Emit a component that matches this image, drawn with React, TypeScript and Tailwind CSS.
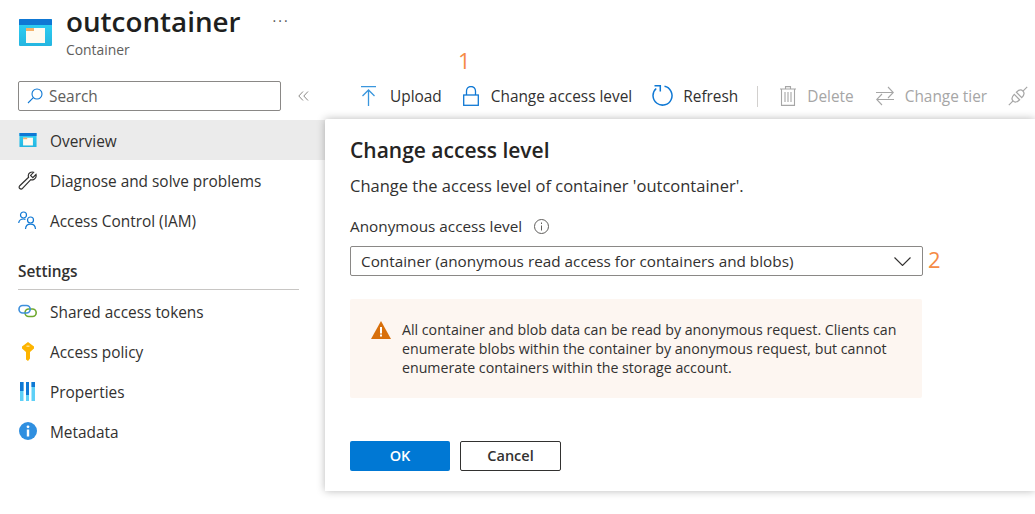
import React from "react";

const font = { fontFamily: '"Open Sans", "Noto Sans", sans-serif' };

function ContainerIcon({ w, h }: { w: number; h: number }) {
  return (
    <svg width={w} height={h} viewBox="0 0 33 27">
      <defs>
        <linearGradient id="cbody" x1="0" y1="0" x2="0" y2="1">
          <stop offset="0" stopColor="#2fd3f7" />
          <stop offset="1" stopColor="#25b5e0" />
        </linearGradient>
      </defs>
      <rect x="0" y="0" width="33" height="27" rx="1" fill="url(#cbody)" />
      <path d="M0 1a1 1 0 0 1 1-1h31a1 1 0 0 1 1 1v5H0z" fill="#0f78d4" />
      <rect x="7" y="9" width="19" height="15" fill="#fffaf0" />
      <rect x="7" y="9" width="8" height="3" fill="#f4b26b" />
    </svg>
  );
}

function NavItem({ icon, label, active, tall }: { icon: React.ReactNode; label: string; active?: boolean; tall?: boolean }) {
  return (
    <div className={`flex h-10 items-center pl-[18px] text-[15.4px] text-[#323130] ${active ? "bg-[#ebebeb]" : ""}`}>
      <span className="flex w-[19px] justify-center">{icon}</span>
      <span className={`ml-[13px] ${tall ? "mt-[4px]" : "mt-[4px]"}`}>{label}</span>
    </div>
  );
}

function ToolItem({ icon, label, disabled, className }: { icon: React.ReactNode; label: string; disabled?: boolean; className: string }) {
  return (
    <div className={`flex items-center text-[15.4px] ${disabled ? "text-[#a6a6a6]" : "text-[#323130]"} ${className}`}>
      {icon}
      <span className="mt-[1px]">{label}</span>
    </div>
  );
}

export default function App() {
  return (
    <div style={font} className="relative h-[514px] w-[1035px] overflow-hidden bg-white">
      <header className="flex h-[81px] pl-[19px]">
        <div className="mt-[19px]"><ContainerIcon w={33} h={27} /></div>
        <div className="ml-[14px]">
          <div className="mt-[2px] flex items-center">
            <h1 className="text-[27.8px] leading-[38px] font-semibold text-[#201f1e]">outcontainer</h1>
            <span className="ml-8 text-[14px] leading-none tracking-[2px] text-[#555]">···</span>
          </div>
          <div className="mt-[1px] text-[13.9px] leading-[18px] text-[#605e5c]">Container</div>
        </div>
      </header>

      <div className="flex">
        <aside className="w-[325px]">
          <div className="flex items-center pl-[18px]">
            <div className="flex h-[30px] w-[263px] items-center rounded-[2px] border border-[#8a8886] pl-2 text-[15.4px] text-[#605e5c]">
              <svg width="16" height="16" viewBox="0 0 16 16" fill="none" stroke="#0f78d4" strokeWidth="1.1">
                <circle cx="10" cy="6" r="5" />
                <path d="M6.3 9.7 1 15" />
              </svg>
              <span className="mt-[1px] ml-[6px]">Search</span>
            </div>
            <svg className="ml-[17px]" width="11" height="10" viewBox="0 0 11 10" fill="none" stroke="#8a8886" strokeWidth="1">
              <path d="M5 0.5 0.8 5 5 9.5M10 0.5 5.8 5 10 9.5" />
            </svg>
          </div>

          <nav className="mt-[9px]">
            <NavItem active label="Overview" icon={<ContainerIcon w={18} h={14} />} />
            <NavItem
              label="Diagnose and solve problems"
              icon={
                <svg width="19" height="19" viewBox="0 0 19 19" fill="none" stroke="#323130" strokeWidth="1.2">
                  <path d="M18 3.5 14.8 6.6 12.6 4.4 15.6 1.3C13.4.4 10.6 1.6 10.3 4.2c-.1.8.1 1.5.3 2.1L1.8 14.7c-.9.9-.9 2 0 2.8.8.8 1.9.8 2.7-.1l8.3-8.7c.7.2 1.4.3 2.2.1 2.3-.5 3.6-3 3-5.3z" />
                </svg>
              }
            />
            <NavItem
              label="Access Control (IAM)"
              icon={
                <svg width="19" height="19" viewBox="0 0 19 19" fill="none" stroke="#0f78d4" strokeWidth="1.2">
                  <circle cx="5.5" cy="4" r="3" />
                  <path d="M.7 12c.3-2.6 2-4 4.8-4 .8 0 1.400.1 2 .4" />
                  <circle cx="12.500" cy="9" r="3" />
                  <path d="M7.500 18c.2-3 2-4.800 5-4.800s4.800 1.800 5 4.800" />
                </svg>
              }
            />
          </nav>

          <div className="mx-[18px] mt-[22px] w-[281px] border-b border-[#c8c6c4] pb-[7px] text-[15.4px] leading-5 font-semibold text-[#323130]">Settings</div>

          <nav className="mt-[1px]">
            <NavItem
              label="Shared access tokens"
              icon={
                <svg width="19" height="14" viewBox="0 0 19 14" fill="none" strokeWidth="1.6">
                  <rect x="7" y="5" width="11.200" height="7.500" rx="3.700" stroke="#6fa92f" />
                  <rect x="1" y="1.500" width="11.200" height="7.500" rx="3.700" stroke="#3d8fdc" />
                </svg>
              }
            />
            <NavItem
              label="Access policy"
              icon={
                <svg width="14" height="19" viewBox="0 0 14 19">
                  <path d="M7 0 13 4.500 13 6.500 9 10V16.500L7 19 5 17.500V10L1 6.500V4.500z" fill="#fdb400" />
                  <rect x="5.500" y="3.500" width="3" height="1.500" fill="#ffe08a" />
                </svg>
              }
            />
            <NavItem
              label="Properties"
              icon={
                <svg width="15" height="19" viewBox="0 0 15 19">
                  <rect x="0" y="0" width="3.500" height="19" fill="#5ed0f7" />
                  <rect x="0" y="0" width="3.500" height="9" fill="#0f78d4" />
                  <rect x="6" y="0" width="3" height="19" fill="#5ed0f7" />
                  <rect x="6" y="0" width="3" height="13" fill="#0f78d4" />
                  <rect x="11.500" y="0" width="3.500" height="19" fill="#5ed0f7" />
                  <rect x="11.500" y="0" width="3.500" height="5" fill="#0f78d4" />
                </svg>
              }
            />
            <NavItem
              label="Metadata"
              icon={
                <svg width="18" height="18" viewBox="0 0 18 18">
                  <circle cx="9" cy="9" r="9" fill="#2f8fe0" />
                  <circle cx="9" cy="4.800" r="1.400" fill="#fff" />
                  <rect x="7.800" y="7.500" width="2.400" height="7" fill="#fff" />
                </svg>
              }
            />
          </nav>
        </aside>

        <main className="min-w-0 flex-1">
          <div className="relative flex h-[30px] items-center whitespace-nowrap">
            <ToolItem
              className="ml-[36px]"
              label="Upload"
              icon={
                <svg className="mr-[14px]" width="15" height="20" viewBox="0 0 15 20" fill="none" stroke="#3a96dd" strokeWidth="1.300">
                  <path d="M0 .7H15M7.500 20V4M1.500 10l6-6 6 6" />
                </svg>
              }
            />
            <ToolItem
              className="ml-[21px]"
              label="Change access level"
              icon={
                <svg className="mr-[12px]" width="16" height="20" viewBox="0 0 16 20" fill="none" stroke="#0f78d4" strokeWidth="1.300">
                  <rect x=".7" y="9" width="14.600" height="10.300" />
                  <path d="M3.500 9V5a4.500 4.500 0 0 1 9 0v4" />
                </svg>
              }
            />
            <ToolItem
              className="ml-[20px]"
              label="Refresh"
              icon={
                <svg className="mr-[10px]" width="21" height="21" viewBox="0 0 21 21" fill="none" stroke="#0f78d4" strokeWidth="1.500">
                  <path d="M12.500 1.300A9.500 9.500 0 1 1 4.200 3.500" />
                  <path d="M2.500 .8H8.300V6.500" />
                </svg>
              }
            />
            <div className="ml-[19px] h-[21px] w-px bg-[#d2d0ce]" />
            <ToolItem
              disabled
              className="ml-[22px]"
              label="Delete"
              icon={
                <svg className="mr-[11px]" width="16" height="20" viewBox="0 0 16 20" fill="none" stroke="#a6a6a6" strokeWidth="1.100">
                  <path d="M0 3H16M5.500 3V.6H10.500V3M1.500 3V19.400H14.500V3M5 6V16M8 6V16M11 6V16" />
                </svg>
              }
            />
            <ToolItem
              disabled
              className="ml-[22px]"
              label="Change tier"
              icon={
                <svg className="mr-[11px]" width="18" height="20" viewBox="0 0 18 20" fill="none" stroke="#a6a6a6" strokeWidth="1.100">
                  <path d="M0 6.500H17M12 1 17.300 6.500 12 12M18 13.500H1M6 8 .7 13.500 6 19" />
                </svg>
              }
            />
            <svg className="ml-[21px] shrink-0" width="20" height="20" viewBox="0 0 20 20" fill="none" stroke="#a6a6a6" strokeWidth="1.200">
              <g transform="rotate(-45 10 10)">
                <path d="M-3 10H3M17 10H23" />
                <path d="M3 10Q3 6.200 8.500 6.200V13.800Q3 13.800 3 10z" />
                <path d="M11.500 6.200Q17 6.200 17 10Q17 13.800 11.500 13.800z" />
              </g>
            </svg>
          </div>

          <div className="mt-[8px] flex h-[372px] flex-col rounded-tl-[2px] bg-white pl-[25px] shadow-[0_0_9px_rgba(0,0,0,0.28)]">
            <h2 className="mt-[17px] text-[21px] leading-[28px] font-semibold text-[#252423]">Change access level</h2>
            <p className="mt-[12px] text-[16.5px] leading-5 text-[#323130]">Change the access level of container 'outcontainer'.</p>
            <div className="mt-[20px] flex h-5 items-center text-[15.3px] text-[#323130]">
              <span>Anonymous access level</span>
              <svg className="ml-3" width="15" height="15" viewBox="0 0 15 15" fill="none" stroke="#605e5c" strokeWidth="1">
                <circle cx="7.500" cy="7.500" r="7" />
                <path d="M7.500 6.500V11.500M7.500 3.500V5" />
              </svg>
            </div>
            <div className="mt-[10px] flex h-[30px] w-[573px] items-center justify-between rounded-[2px] border border-[#8a8886] pr-[11px] pl-[10px] text-[15.3px] text-[#323130]">
              <span>Container (anonymous read access for containers and blobs)</span>
              <svg width="17" height="9" viewBox="0 0 17 9" fill="none" stroke="#323130" strokeWidth="1.100">
                <path d="M.5.500 8.500 8.500 16.500.500" />
              </svg>
            </div>
            <div className="mt-[23px] flex h-[99px] w-[572px] items-start rounded-[2px] bg-[#fdf6f1] pt-[21px] pl-[21px]">
              <svg className="mt-[1px] shrink-0" width="20" height="18" viewBox="0 0 20 18">
                <path d="M10 0 20 18H0z" fill="#d86f0b" />
                <rect x="9" y="6" width="2" height="6.500" fill="#fff" />
                <rect x="9" y="13.500" width="2" height="2" fill="#fff" />
              </svg>
              <p className="ml-[11px] w-[515px] text-[14.2px] leading-[19px] text-[#323130]">
                All container and blob data can be read by anonymous request. Clients can enumerate blobs within the container by anonymous request, but cannot enumerate containers within the storage account.
              </p>
            </div>
            <div className="mt-[43px] flex gap-[10px] text-[14.5px] font-semibold">
              <button className="h-[30px] w-[100px] rounded-[2px] bg-[#0078d4] text-white">OK</button>
              <button className="h-[30px] w-[101px] rounded-[2px] border border-[#323130] bg-white text-[#323130]">Cancel</button>
            </div>
          </div>
        </main>
      </div>

      <span className="absolute top-[46px] left-[458px] text-[22px] leading-[28px] font-medium text-[#f58b45]">1</span>
      <span className="absolute top-[245px] left-[928px] text-[22px] leading-[28px] font-medium text-[#f58b45]">2</span>
    </div>
  );
}
